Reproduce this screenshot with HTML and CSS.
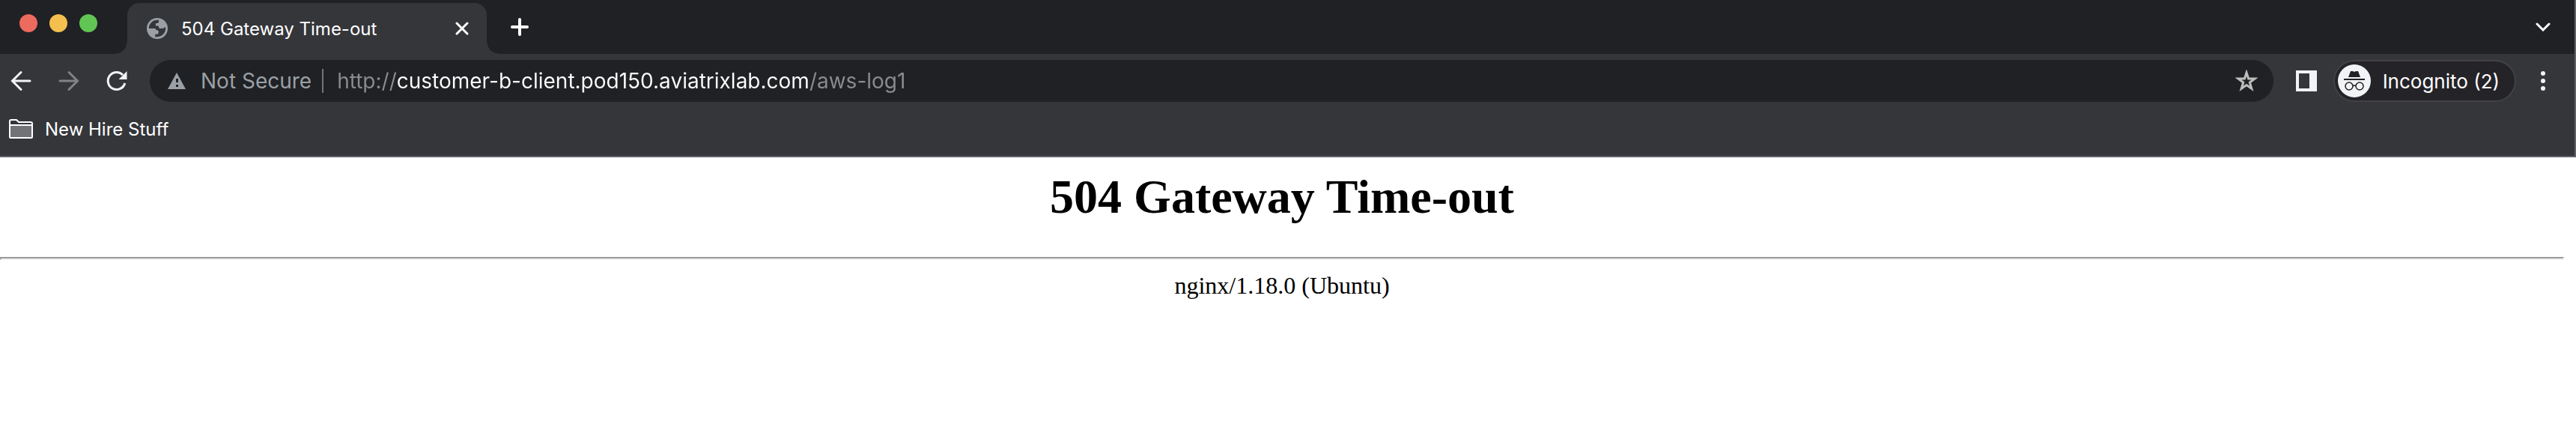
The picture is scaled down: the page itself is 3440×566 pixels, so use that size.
FILE: index.html
```html
<!DOCTYPE html>
<html lang="en">
<head>
<meta charset="utf-8">
<title>504 Gateway Time-out</title>
<link rel="stylesheet" href="styles.css">
</head>
<body>
<header class="browser">
  <div class="tab-strip">
    <div class="window-controls">
      <button class="light light-close" aria-label="Close window"></button>
      <button class="light light-minimize" aria-label="Minimize window"></button>
      <button class="light light-zoom" aria-label="Zoom window"></button>
    </div>
    <div class="tab">
      <svg class="tab-icon" viewBox="2 2 20 20" aria-hidden="true"><circle cx="12" cy="12" r="10" fill="#9aa0a6"/><path fill="#35363a" d="M4 12A8 8 0 0 1 12 4h1.500v1.500L12.500 7H10.500v2.500H13l1 2.500h3.500l2.300-1.500A8 8 0 0 1 12 20h-2v-2.500h2.500L13.500 15l-1.500-1.500h-1.500V12z"/></svg>
      <span class="tab-title">504 Gateway Time-out</span>
      <button class="icon-button tab-close" aria-label="Close tab"><svg width="18" height="18" viewBox="0 0 18 18"><path d="M2 2l14 14M16 2L2 16" stroke="#fff" stroke-width="3" stroke-linecap="round"/></svg></button>
    </div>
    <button class="icon-button new-tab" aria-label="New tab"><svg width="24" height="24" viewBox="0 0 24 24"><path d="M12 2v20M2 12h20" stroke="#fff" stroke-width="4" stroke-linecap="round"/></svg></button>
    <button class="icon-button tab-search" aria-label="Search tabs"><svg width="20" height="12" viewBox="0 0 20 12"><path d="M2 2l8 8 8-8" fill="none" stroke="#fff" stroke-width="3" stroke-linecap="round"/></svg></button>
  </div>
  <div class="toolbar">
    <nav class="navigation" aria-label="History">
      <button class="icon-button" aria-label="Back"><svg width="28" height="28" viewBox="0 0 28 28"><path d="M26 14H3M14 2.500L2.500 14 14 25.500" fill="none" stroke="#f1f3f4" stroke-width="3" stroke-linecap="round"/></svg></button>
      <button class="icon-button" aria-label="Forward" disabled><svg width="28" height="28" viewBox="0 0 28 28"><path d="M2 14h23M14 2.500L25.500 14 14 25.500" fill="none" stroke="#818286" stroke-width="3" stroke-linecap="round"/></svg></button>
      <button class="icon-button" aria-label="Reload"><svg width="28" height="28" viewBox="0 0 28 28"><path d="M24.800 17A11.500 11.500 0 1 1 22 6" fill="none" stroke="#f1f3f4" stroke-width="3"/><path d="M27.500 1v11h-11z" fill="#f1f3f4"/></svg></button>
    </nav>
    <form class="address-bar">
      <svg class="warning" width="24" height="22" viewBox="0 0 24 22" aria-hidden="true"><path d="M12 0l12 22H0z" fill="#9aa0a6"/><path d="M11 8h3v5h-3zM11 16h3v3h-3z" fill="#202124"/></svg>
      <label class="security" for="url">Not Secure</label>
      <span class="divider"></span>
      <input class="url" id="url" type="text" value="http://customer-b-client.pod150.aviatrixlab.com/aws-log1" spellcheck="false">
      <button class="icon-button star" type="button" aria-label="Bookmark this tab"><svg width="30" height="30" viewBox="0 0 30 30"><path d="M15 4l2.600 8H26l-6.700 5 2.500 8.200L15 20.500l-6.800 4.700L10.700 17 4 12h8.400z" fill="none" stroke="#bdbdbd" stroke-width="3"/></svg></button>
    </form>
    <button class="icon-button side-panel" aria-label="Side panel"><svg width="28" height="28" viewBox="0 0 28 28"><path fill="#f1f3f4" fill-rule="evenodd" d="M0 0h28v28H0zM4 4v20h14V4z"/></svg></button>
    <button class="profile">
      <svg width="44" height="44" viewBox="0 0 44 44" aria-hidden="true"><circle cx="22" cy="22" r="22" fill="#f1f3f4"/><g fill="#202124"><path d="M14 17l3-8h3l2 1 2-1h3l3 8z"/><path d="M8 19h28v2H8z"/></g><g fill="none" stroke="#202124" stroke-width="1.500"><circle cx="15" cy="29" r="5"/><circle cx="29" cy="29" r="5"/><path d="M20 29q2-2 4 0"/></g></svg>
      <span>Incognito (2)</span>
    </button>
    <button class="icon-button menu" aria-label="Menu"><svg width="6" height="26" viewBox="0 0 6 26"><g fill="#f1f3f4"><circle cx="3" cy="3" r="3"/><circle cx="3" cy="13" r="3"/><circle cx="3" cy="23" r="3"/></g></svg></button>
  </div>
  <nav class="bookmarks" aria-label="Bookmarks">
    <a class="bookmark" href="#"><svg width="32" height="26" viewBox="0 0 32 26" aria-hidden="true"><path d="M2 9h28v15H2z" fill="#727377"/><path d="M1 24V3q0-2 2-2h7l3 3h16q2 0 2 2v18q0 1-1 1H2q-1 0-1-1zM1 8h30" fill="none" stroke="#fff" stroke-width="2"/></svg>New Hire Stuff</a>
  </nav>
</header>
<main class="page">
  <h1>504 Gateway Time-out</h1>
  <hr>
  <p>nginx/1.18.0 (Ubuntu)</p>
</main>
</body>
</html>
```
FILE: styles.css
```css
* { box-sizing: border-box; }
body { margin: 0; background: #fff; color: #000; font-family: "Liberation Serif", serif; }
button, input { font: inherit; color: inherit; margin: 0; padding: 0; border: 0; background: none; }
svg { display: block; flex: none; }
.browser { background: #35363a; border-bottom: 2px solid #5f6065; border-right: 2px solid #5f6065; color: #fff; font-family: Inter, sans-serif; font-size: 24px; }
.icon-button { display: flex; flex: none; align-items: center; justify-content: center; }
.tab-strip { display: flex; align-items: center; height: 72px; padding-right: 32px; background: #202124; }
.window-controls { display: flex; gap: 16px; width: 170px; height: 72px; padding: 19px 26px; }
.light { width: 24px; height: 24px; border-radius: 50%; }
.light-close { background: #ed6a5e; }
.light-minimize { background: #f5bf4f; }
.light-zoom { background: #61c554; }
.tab { position: relative; display: flex; align-items: center; align-self: flex-end; width: 480px; height: 68px; padding: 0 24px 0 26px; border-radius: 16px 16px 0 0; background: #35363a; }
.tab::before, .tab::after { content: ""; position: absolute; bottom: 0; width: 16px; height: 16px; }
.tab::before { right: 100%; background: radial-gradient(circle at 0 0, #202124 15px, #35363a 16px); }
.tab::after { left: 100%; background: radial-gradient(circle at 100% 0, #202124 15px, #35363a 16px); }
.tab-icon { width: 28px; height: 28px; }
.tab-title { margin-left: 18px; white-space: nowrap; }
.tab-close { margin-left: auto; }
.new-tab { margin-left: 32px; }
.tab-search { margin-left: auto; }
.toolbar { display: flex; align-items: center; padding: 8px 39px 8px 14px; font-size: 28px; }
.navigation { display: flex; gap: 36px; }
.address-bar { display: flex; flex: 1; align-items: center; height: 56px; margin-left: 30px; padding: 0 21px 0 24px; border-radius: 28px; background: #202124; }
.security { margin-left: 20px; color: #9aa0a6; white-space: nowrap; }
.divider { width: 2px; height: 32px; margin: 0 18px 0 14px; background: #717478; }
.url { flex: 1; min-width: 0; height: 40px; outline: 0; color: #fff; background: linear-gradient(90deg, #8b8c8f 79px, #fff 79px 631px, #8b8c8f 631px); background-clip: text; -webkit-background-clip: text; -webkit-text-fill-color: transparent; }
.side-panel { margin-left: 30px; }
.profile { display: flex; flex: none; align-items: center; gap: 16px; height: 56px; margin-left: 22px; padding: 0 20px 0 4px; border: 2px solid #414146; border-radius: 28px; background: #242328; font-size: 26px; white-space: nowrap; }
.menu { margin-left: 33px; }
.bookmarks { display: flex; align-items: center; height: 64px; padding: 0 12px 8px; }
.bookmark { display: flex; align-items: center; gap: 16px; color: #fff; text-decoration: none; }
.page { padding-right: 16px; text-align: center; }
h1 { margin: 0; padding: 16px 0 43px; font-size: 64px; line-height: 74px; }
hr { margin: 0; border: 2px inset #eee; }
.page p { margin: 14px 0; font-size: 32px; line-height: 40px; }
```
